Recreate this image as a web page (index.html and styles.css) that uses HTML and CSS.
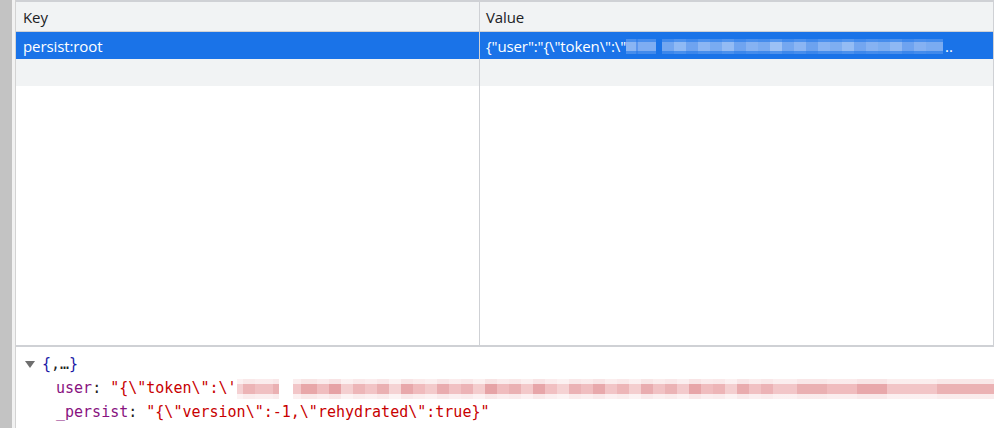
FILE: index.html
```html
<!DOCTYPE html>
<html>
<head>
<meta charset="utf-8">
<link rel="stylesheet" href="styles.css">
</head>
<body>
<div class="gutter"></div>
<div class="gap"></div>
<div class="main">
  <div class="grid">
    <div class="col col-key">
      <div class="cell head">Key</div>
      <div class="cell sel">persist:root</div>
      <div class="cell alt"></div>
      <div class="fill"></div>
    </div>
    <div class="col col-val">
      <div class="cell head">Value</div>
      <div class="cell sel"><span class="val-text">{"user":"{\"token\":\"</span><span class="blur-blue"></span><span class="dots">..</span></div>
      <div class="cell alt"></div>
      <div class="fill"></div>
    </div>
  </div>
  <div class="preview">
    <div class="line root"><span class="tri"></span><span class="brace">{</span><span class="p">,…</span><span class="brace">}</span></div>
    <div class="line prop"><span class="k">user</span><span class="p">: </span><span class="s">"{\"token\":\'</span><span class="blur-red"></span></div>
    <div class="line prop"><span class="k">_persist</span><span class="p">: </span><span class="s">"{\"version\":-1,\"rehydrated\":true}"</span></div>
  </div>
</div>
</body>
</html>
```
FILE: styles.css
```css
html, body {
  margin: 0;
  padding: 0;
}
body {
  width: 994px;
  height: 428px;
  overflow: hidden;
  display: flex;
  background: #fff;
  font-family: "Open Sans", "Noto Sans", sans-serif;
}
.gutter {
  width: 12px;
  background: #c3c3c3;
  flex: none;
}
.gap {
  width: 3px;
  background: #f2f2f2;
  flex: none;
}
.main {
  flex: 1;
  display: flex;
  flex-direction: column;
  border-left: 1px solid #d3d3d3;
  min-width: 0;
}
.grid {
  height: 343px;
  flex: none;
  display: grid;
  grid-template-columns: 463px 1fr;
  border-top: 2px solid #cfd1d5;
  border-bottom: 2px solid #cfd1d5;
  border-right: 1px solid #cfd1d5;
}
.col {
  display: flex;
  flex-direction: column;
  min-width: 0;
}
.col-val {
  border-left: 1px solid #cfd1d5;
}
.cell {
  height: 27px;
  display: flex;
  align-items: center;
  padding-left: 7px;
  font-size: 15px;
  letter-spacing: -0.1px;
  color: #202124;
  white-space: nowrap;
  overflow: hidden;
}
.col-val .cell {
  padding-left: 6px;
}
.head {
  height: 29px;
  background: #f1f3f4;
  border-bottom: 1px solid #cfd1d5;
}
.sel {
  background: #1a73e8;
  color: #fff;
}
.alt {
  background: #f1f3f4;
}
.fill {
  flex: 1;
}
.blur-blue {
  display: inline-block;
  flex: none;
  width: 317px;
  height: 15px;
  margin-top: 1px;
  background:
    linear-gradient(180deg, rgba(26,115,232,0.55) 0 3px, transparent 3px 12px, rgba(26,115,232,0.6) 12px),
    linear-gradient(90deg,
      #8ab5f3 0 10px, #5b96ee 10px 12px, #7eadf2 12px 30px, #1a73e8 30px 36px, #72a6f0 36px 48px,
      #8fb9f4 48px 60px, #6ea3f0 60px 72px, #8cb6f3 72px 84px, #79abf1 84px 96px, #93bbf4 96px 108px,
      #6fa4f0 108px 120px, #86b2f2 120px 132px, #7aabf1 132px 144px, #9cc1f5 144px 156px,
      #74a7f0 156px 168px, #8bb5f3 168px 180px, #6ca2ef 180px 192px, #88b4f3 192px 204px,
      #7eaef1 204px 216px, #94bcf4 216px 228px, #73a6f0 228px 240px, #86b2f2 240px 252px,
      #7badf1 252px 264px, #8fb8f3 264px 276px, #6ea3f0 276px 288px, #85b1f2 288px 300px, #7aabf1 300px 317px);
}
.dots {
  margin-left: 2px;
}
.preview {
  flex: 1;
  padding: 5px 0 0 8px;
  font-family: "DejaVu Sans Mono", "Liberation Mono", monospace;
  font-size: 15px;
  line-height: 24px;
  white-space: nowrap;
  overflow: hidden;
}
.line {
  display: flex;
  align-items: center;
  height: 24px;
}
.tri {
  width: 0;
  height: 0;
  border-left: 5px solid transparent;
  border-right: 5px solid transparent;
  border-top: 7px solid #6e6e6e;
  margin-left: 1px;
  margin-right: 7px;
}
.brace {
  color: #1a1aa6;
}
.prop {
  padding-left: 32px;
}
.k {
  color: #881280;
}
.p {
  color: #222;
  white-space: pre;
}
.s {
  color: #c80000;
}
.blur-red {
  display: inline-block;
  width: 760px;
  height: 20px;
  flex: none;
  margin-top: 2px;
  background:
    linear-gradient(180deg, rgba(255,255,255,0.7) 0 5px, transparent 5px 15px, rgba(255,255,255,0.75) 15px),
    linear-gradient(90deg,
      #f4d0d2 0 6px, #ecb4b6 6px 18px, #f0c0c2 18px 36px, #eab0b2 36px 42px, #fff 42px 56px,
      #f2c6c8 56px 64px, #e8a7a9 64px 80px, #f0bdbf 80px 92px, #e6a2a5 92px 104px, #f4cfd0 104px 116px,
      #edb6b8 116px 128px, #f2c4c6 128px 140px, #eab0b2 140px 152px, #f5d3d4 152px 164px,
      #e8a8ab 164px 176px, #f0bbbd 176px 188px, #f3cacb 188px 200px, #e9acaf 200px 212px,
      #f1c1c3 212px 224px, #ecb3b6 224px 236px, #f4cdce 236px 248px, #e6a3a6 248px 260px,
      #f0bcbe 260px 272px, #eab1b3 272px 284px, #f3c9ca 284px 296px, #e7a6a9 296px 308px,
      #f1c0c2 308px 320px, #f5d2d3 320px 332px, #ebb2b5 332px 344px, #f0bec0 344px 356px,
      #e8a9ac 356px 368px, #f2c5c7 368px 380px, #edb6b8 380px 392px, #f4cecf 392px 404px,
      #e9adb0 404px 416px, #f1c2c4 416px 428px, #ebb3b5 428px 440px, #f3cacc 440px 452px,
      #e7a5a8 452px 464px, #f0bdbf 464px 476px, #edb5b7 476px 488px, #f4cfd0 488px 500px,
      #e9acae 500px 512px, #f1c1c3 512px 524px, #ecb3b6 524px 536px, #f2c6c8 536px 560px,
      #eab0b2 560px 590px, #f0bcbe 590px 620px, #e8a8ab 620px 650px, #f2c5c7 650px 700px, #ebb2b4 700px 760px);
}
```
